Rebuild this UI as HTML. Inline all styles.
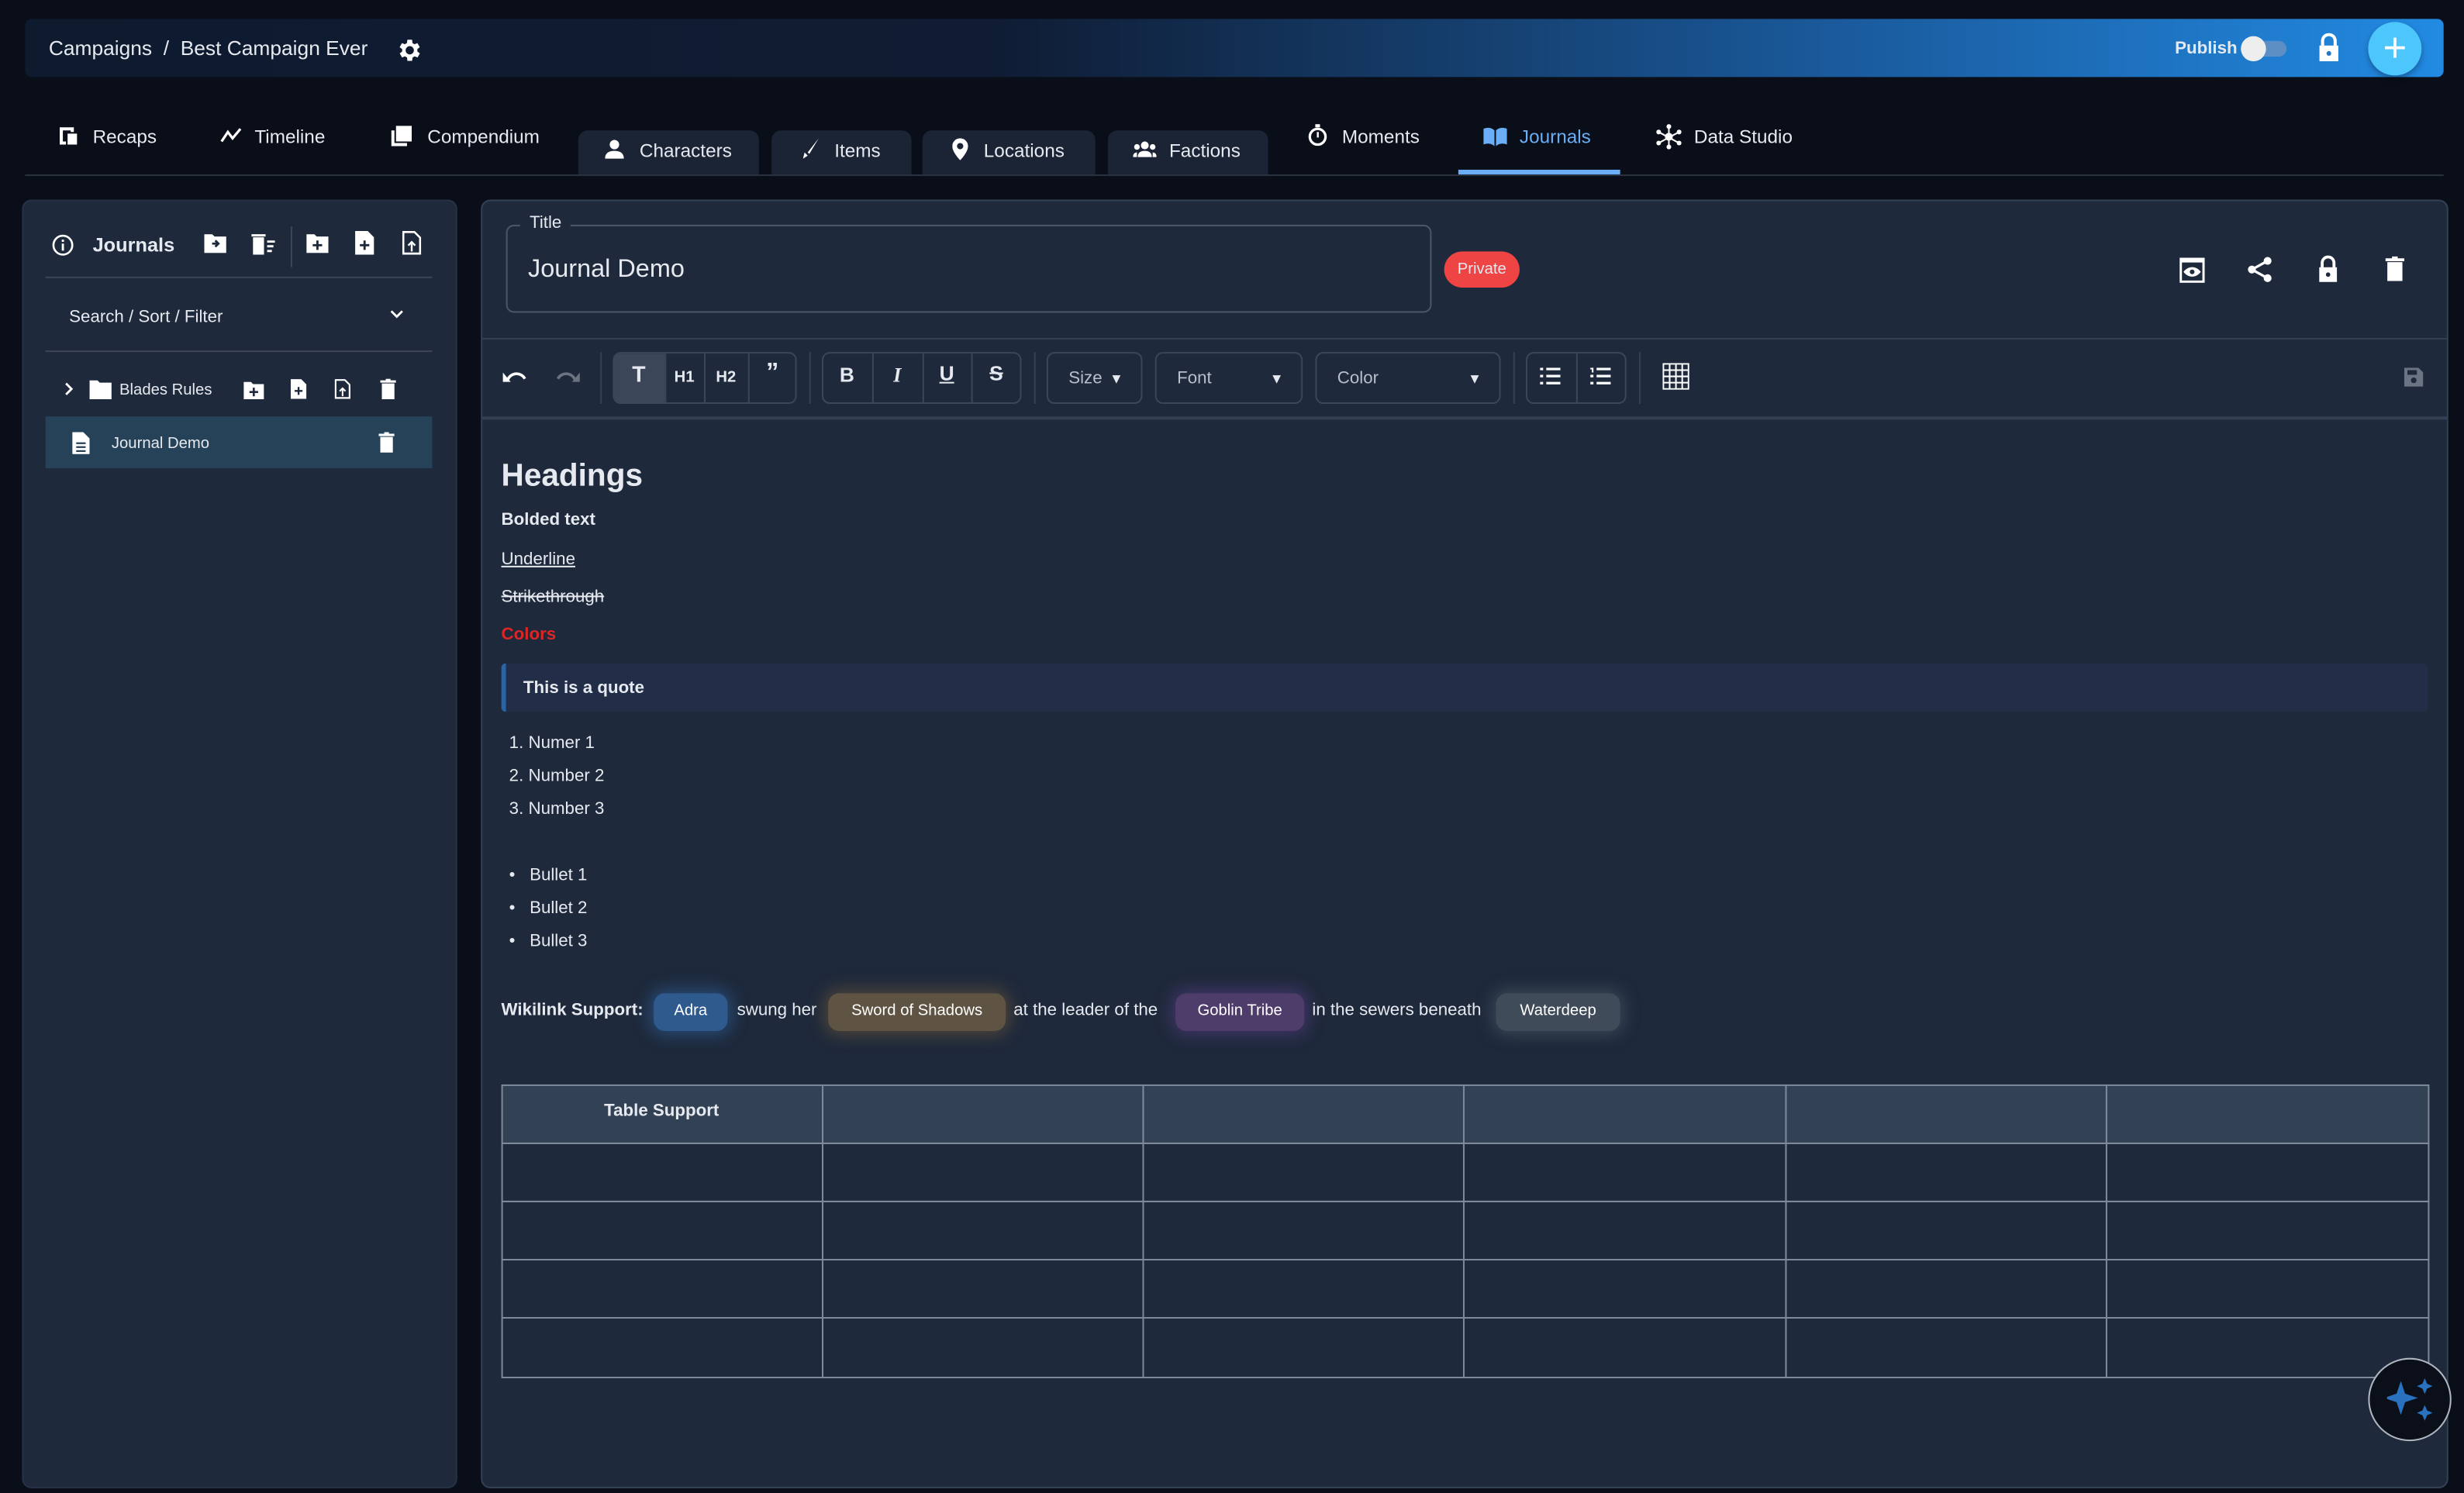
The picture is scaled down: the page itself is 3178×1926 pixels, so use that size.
<!DOCTYPE html>
<html><head><meta charset="utf-8"><style>
*{box-sizing:border-box;margin:0;padding:0}
html,body{width:3178px;height:1926px;overflow:hidden;background:#0a0e18}
#s{position:absolute;left:0;top:0;width:1568px;height:950px;transform:scale(2.0268,2.0274);transform-origin:0 0;font-family:"Liberation Sans",sans-serif;color:#e6e9ef;background:#0a0e18}
.a{position:absolute}
.t{position:absolute;white-space:nowrap;font-size:12px;line-height:14px}
svg{position:absolute;fill:#fff}
.tab{position:absolute;top:83px;height:28px;background:#1b2435;border-radius:6px 6px 0 0}
.grp{position:absolute;top:224px;height:33px;border:1px solid #3b4658;border-radius:5px}
.vs{position:absolute;top:0;bottom:0;width:1px;background:#3b4658}
.chip{position:absolute;top:632px;height:24px;border-radius:7px;font-size:10px;line-height:24px;text-align:center;color:#fff}
</style></head><body><div id="s">
<!-- header -->
<div class="a" style="left:16px;top:12px;width:1539px;height:37px;border-radius:4px;background:linear-gradient(90deg,#0e1a2e 0%,#0f1c33 40%,#1a5a9c 75%,#228ae2 100%)"></div>
<div class="t" style="left:31px;top:24px;font-size:13px">Campaigns &nbsp;/ &nbsp;Best Campaign Ever</div>
<svg style="left:251px;top:23px" width="18" height="18" viewBox="0 0 24 24"><path d="M19.4 13a7.5 7.5 0 000-2l2.1-1.6-2-3.5-2.5 1a7 7 0 00-1.7-1L15 3h-4l-.4 2.9a7 7 0 00-1.7 1l-2.5-1-2 3.5L6.6 11a7.5 7.5 0 000 2l-2.1 1.6 2 3.5 2.5-1a7 7 0 001.7 1L11 21h4l.4-2.9a7 7 0 001.7-1l2.5 1 2-3.5zM13 15.5a3.5 3.5 0 110-7 3.5 3.5 0 010 7z"/></svg>
<div class="t" style="left:1384px;top:24px;font-size:11px;font-weight:bold">Publish</div>
<div class="a" style="left:1430px;top:26px;width:25px;height:10px;border-radius:5px;background:#5d8fc4"></div>
<div class="a" style="left:1426px;top:23px;width:16px;height:16px;border-radius:8px;background:#eee"></div>
<svg style="left:1474px;top:21px" width="16" height="18" viewBox="0 0 16 18"><path d="M3 8V5a5 5 0 0110 0v3h-2V5a3 3 0 00-6 0v3zM2 8h12v10H2z"/><circle cx="8" cy="13" r="1.5" fill="#2379c8"/></svg>
<div class="a" style="left:1507px;top:14px;width:34px;height:34px;border-radius:17px;background:#4cc6fb;box-shadow:0 2px 4px rgba(0,0,0,.3)"></div>
<div class="t" style="left:1507px;top:16px;width:34px;text-align:center;font-size:26px;line-height:28px;color:#fff">+</div>
<!-- nav -->
<div class="tab" style="left:368px;width:115px"></div>
<div class="tab" style="left:491px;width:89px"></div>
<div class="tab" style="left:587px;width:110px"></div>
<div class="tab" style="left:705px;width:102px"></div>
<div class="a" style="left:16px;top:111px;width:1539px;height:1px;background:#2a3140"></div>
<div class="a" style="left:928px;top:108px;width:103px;height:3px;background:#6aaef5"></div>
<svg style="left:37px;top:80px" width="13" height="13" viewBox="0 0 13 13"><path d="M1 1h9v3H8V3H3v7h2v2H1zM6 5h6v7H6z"/></svg>
<div class="t" style="left:59px;top:80px;font-size:12px">Recaps</div>
<svg style="left:140px;top:81px" width="14" height="10" viewBox="0 0 14 10"><path d="M1 9l4-6 3 4 5-6" stroke="#fff" stroke-width="1.6" fill="none"/></svg>
<div class="t" style="left:162px;top:80px">Timeline</div>
<svg style="left:249px;top:80px" width="13" height="13" viewBox="0 0 13 13"><path d="M3 0h10v10H3zM0 3h2v8h8v2H0z"/></svg>
<div class="t" style="left:272px;top:80px">Compendium</div>
<svg style="left:385px;top:89px" width="12" height="12" viewBox="0 0 12 12"><circle cx="6" cy="3" r="3"/><path d="M0 12c0-4 3-5 6-5s6 1 6 5z"/></svg>
<div class="t" style="left:407px;top:89px">Characters</div>
<svg style="left:510px;top:88px" width="12" height="13" viewBox="0 0 12 13"><path d="M11 0L4 9l1 1zM2 9l2 2-3 2z"/></svg>
<div class="t" style="left:531px;top:89px">Items</div>
<svg style="left:606px;top:88px" width="10" height="14" viewBox="0 0 10 14"><path d="M5 0a5 5 0 015 5c0 4-5 9-5 9S0 9 0 5a5 5 0 015-5z"/><circle cx="5" cy="5" r="2" fill="#1b2435"/></svg>
<div class="t" style="left:626px;top:89px">Locations</div>
<svg style="left:721px;top:90px" width="15" height="10" viewBox="0 0 15 10"><circle cx="7.5" cy="2.5" r="2.5"/><circle cx="2.5" cy="3.5" r="1.8"/><circle cx="12.5" cy="3.5" r="1.8"/><path d="M3 10c0-3 2-4 4.5-4S12 7 12 10zM0 10c0-2 1-3 2.5-3v3zM15 10c0-2-1-3-2.5-3v3z"/></svg>
<div class="t" style="left:744px;top:89px">Factions</div>
<svg style="left:832px;top:79px" width="13" height="14" viewBox="0 0 13 14"><circle cx="6.5" cy="8" r="5" stroke="#fff" stroke-width="1.6" fill="none"/><path d="M5 0h3v2H5zM6 5h1.2v3.5H6z"/></svg>
<div class="t" style="left:854px;top:80px">Moments</div>
<svg style="left:944px;top:81px" width="15" height="12" viewBox="0 0 15 12"><path d="M0 1c2-1 5-1 7 1v10C5 10 2 10 0 11zM15 1c-2-1-5-1-7 1v10c2-2 5-2 7-1z" fill="#6aaef5"/></svg>
<div class="t" style="left:967px;top:80px;color:#6aaef5">Journals</div>
<svg style="left:1054px;top:79px" width="16" height="16" viewBox="0 0 16 16"><circle cx="8" cy="8" r="2.5"/><circle cx="8" cy="1.5" r="1.5"/><circle cx="8" cy="14.5" r="1.5"/><circle cx="1.5" cy="5" r="1.5"/><circle cx="14.5" cy="5" r="1.5"/><circle cx="1.5" cy="12" r="1.5"/><circle cx="14.5" cy="12" r="1.5"/><path d="M8 1v14M1.5 5L14.5 12M14.5 5L1.5 12" stroke="#fff" stroke-width="1"/></svg>
<div class="t" style="left:1078px;top:80px">Data Studio</div>
<!-- left panel -->
<div class="a" style="left:14px;top:127px;width:277px;height:820px;background:#1e293b;border-radius:6px;border:1px solid #263246"></div>
<svg style="left:33px;top:149px" width="14" height="14" viewBox="0 0 14 14"><circle cx="7" cy="7" r="6" stroke="#fff" stroke-width="1.3" fill="none"/><path d="M6.3 6h1.4v4.5H6.3zM6.3 3.5h1.4v1.4H6.3z"/></svg>
<div class="t" style="left:59px;top:149px;font-size:12.5px;font-weight:bold">Journals</div>
<svg style="left:130px;top:149px" width="14" height="12" viewBox="0 0 14 12"><path d="M0 0h5l1.5 1.5H14V12H0z"/><path d="M5 6h4M7 4l2 2-2 2" stroke="#1e293b" stroke-width="1.4" fill="none"/></svg>
<svg style="left:160px;top:148px" width="15" height="14" viewBox="0 0 15 14"><path d="M0 1h9v1.5H0zM1 3h7v11H1zM10 5h5v1.4h-5zM10 8h4v1.4h-4zM10 11h3v1.4h-3z"/></svg>
<div class="a" style="left:185px;top:144px;width:1px;height:26px;background:#3b4658"></div>
<svg style="left:195px;top:149px" width="14" height="12" viewBox="0 0 14 12"><path d="M0 0h5l1.5 1.5H14V12H0z"/><path d="M7 4v6M4 7h6" stroke="#1e293b" stroke-width="1.4"/></svg>
<svg style="left:226px;top:147px" width="12" height="15" viewBox="0 0 12 15"><path d="M0 0h8l4 4v11H0z"/><path d="M6 6v6M3 9h6" stroke="#1e293b" stroke-width="1.4"/></svg>
<svg style="left:256px;top:147px" width="12" height="15" viewBox="0 0 12 15"><path d="M0 0h8l4 4v11H0z"/><path d="M1.3 1.3h6.2l3.2 3.2v9.2H1.3z" fill="#1e293b"/><path d="M6 13V7M3.8 9.2L6 7l2.2 2.2" stroke="#fff" stroke-width="1.2" fill="none"/></svg>
<div class="a" style="left:29px;top:176px;width:246px;height:1px;background:#3b4658"></div>
<div class="t" style="left:44px;top:195px;font-size:11px">Search / Sort / Filter</div>
<svg style="left:248px;top:197px" width="9" height="6" viewBox="0 0 9 6"><path d="M1 1l3.5 3.5L8 1" stroke="#fff" stroke-width="1.4" fill="none"/></svg>
<div class="a" style="left:29px;top:223px;width:246px;height:1px;background:#3b4658"></div>
<svg style="left:41px;top:243px" width="6" height="9" viewBox="0 0 6 9"><path d="M1 1l3.5 3.5L1 8" stroke="#fff" stroke-width="1.4" fill="none"/></svg>
<svg style="left:57px;top:242px" width="14" height="12" viewBox="0 0 14 12"><path d="M0 0h5l1.5 1.5H14V12H0z"/></svg>
<div class="t" style="left:76px;top:242px;font-size:10px">Blades Rules</div>
<svg style="left:155px;top:243px" width="13" height="11" viewBox="0 0 14 12"><path d="M0 0h5l1.5 1.5H14V12H0z"/><path d="M7 4v6M4 7h6" stroke="#1e293b" stroke-width="1.4"/></svg>
<svg style="left:185px;top:241px" width="10" height="13" viewBox="0 0 12 15"><path d="M0 0h8l4 4v11H0z"/><path d="M6 6v6M3 9h6" stroke="#1e293b" stroke-width="1.4"/></svg>
<svg style="left:213px;top:241px" width="10" height="13" viewBox="0 0 12 15"><path d="M0 0h8l4 4v11H0z"/><path d="M1.3 1.3h6.2l3.2 3.2v9.2H1.3z" fill="#1e293b"/><path d="M6 13V7M3.8 9.2L6 7l2.2 2.2" stroke="#fff" stroke-width="1.2" fill="none"/></svg>
<svg style="left:242px;top:241px" width="10" height="13" viewBox="0 0 10 13"><path d="M0 1h3.5V0h3v1H10v1.5H0zM1 3h8v10H1z"/></svg>
<div class="a" style="left:29px;top:265px;width:246px;height:33px;background:#264259"></div>
<svg style="left:46px;top:275px" width="11" height="14" viewBox="0 0 11 14"><path d="M0 0h7l4 4v10H0z"/><path d="M2.5 7h6M2.5 9.5h6M2.5 12h6" stroke="#264259" stroke-width="1.1"/></svg>
<div class="t" style="left:71px;top:276px;font-size:10px">Journal Demo</div>
<svg style="left:241px;top:275px" width="10" height="13" viewBox="0 0 10 13"><path d="M0 1h3.5V0h3v1H10v1.5H0zM1 3h8v10H1z"/></svg>
<!-- right panel -->
<div class="a" style="left:306px;top:127px;width:1252px;height:820px;background:#1e293b;border-radius:6px;border:1px solid #334155"></div>
<div class="a" style="left:322px;top:143px;width:589px;height:56px;border:1px solid #4a5568;border-radius:5px"></div>
<div class="a" style="left:331px;top:138px;width:32px;height:8px;background:#1e293b"></div>
<div class="t" style="left:337px;top:135px;font-size:11px">Title</div>
<div class="t" style="left:336px;top:163px;font-size:16px;line-height:18px">Journal Demo</div>
<div class="a" style="left:919px;top:160px;width:48px;height:23px;border-radius:12px;background:#ef4444"></div>
<div class="t" style="left:919px;top:165px;width:48px;text-align:center;font-size:10px">Private</div>
<svg style="left:1387px;top:164px" width="16" height="16" viewBox="0 0 16 16"><path d="M0 0h16v16H0z"/><path d="M1.5 3h13v11.5h-13z" fill="#1e293b"/><path d="M2.5 9c3-4 8-4 11 0-3 4-8 4-11 0z"/><circle cx="8" cy="9" r="1.5" fill="#1e293b"/></svg>
<svg style="left:1430px;top:163px" width="16" height="17" viewBox="0 0 16 17"><circle cx="13" cy="3" r="2.5"/><circle cx="3" cy="8.5" r="2.5"/><circle cx="13" cy="14" r="2.5"/><path d="M13 3L3 8.5 13 14" stroke="#fff" stroke-width="1.6" fill="none"/></svg>
<svg style="left:1474px;top:162px" width="15" height="18" viewBox="0 0 16 18"><path d="M3 8V5a5 5 0 0110 0v3h-2V5a3 3 0 00-6 0v3zM2 8h12v10H2z"/><circle cx="8" cy="13" r="1.5" fill="#1e293b"/></svg>
<svg style="left:1518px;top:163px" width="12" height="16" viewBox="0 0 10 13"><path d="M0 1h3.5V0h3v1H10v1.5H0zM1 3h8v10H1z"/></svg>
<div class="a" style="left:307px;top:215px;width:1250px;height:1px;background:#334155"></div>
<div class="a" style="left:307px;top:265px;width:1250px;height:2px;background:#334155"></div>
<!-- toolbar -->
<svg style="left:320px;top:234px" width="15" height="11" viewBox="0 0 15 11"><path d="M3 8a6 6 0 0111-1" stroke="#fff" stroke-width="1.8" fill="none"/><path d="M0 3v6h5z"/></svg>
<svg style="left:354px;top:234px" width="15" height="11" viewBox="0 0 15 11"><path d="M12 8A6 6 0 001 7" stroke="#6b7280" stroke-width="1.8" fill="none"/><path d="M15 3v6h-5z" fill="#6b7280"/></svg>
<div class="a" style="left:382px;top:224px;width:1px;height:33px;background:#334155"></div>
<div class="grp" style="left:390px;width:117px"><div class="a" style="left:0;top:0;width:32px;height:31px;background:#3b4658;border-radius:4px 0 0 4px"></div><div class="vs" style="left:32px"></div><div class="vs" style="left:57px"></div><div class="vs" style="left:85px"></div></div>
<div class="t" style="left:390px;top:231px;width:33px;text-align:center;font-size:14px;font-weight:bold">T</div>
<div class="t" style="left:423px;top:234px;width:25px;text-align:center;font-size:10px;font-weight:bold">H1</div>
<div class="t" style="left:448px;top:234px;width:28px;text-align:center;font-size:10px;font-weight:bold">H2</div>
<div class="t" style="left:476px;top:231px;width:31px;text-align:center;font-size:16px;font-weight:bold">&#8221;</div>
<div class="a" style="left:515px;top:224px;width:1px;height:33px;background:#334155"></div>
<div class="grp" style="left:523px;width:127px"><div class="vs" style="left:31px"></div><div class="vs" style="left:63px"></div><div class="vs" style="left:94px"></div></div>
<div class="t" style="left:523px;top:232px;width:32px;text-align:center;font-size:13px;font-weight:bold">B</div>
<div class="t" style="left:555px;top:232px;width:32px;text-align:center;font-size:13px;font-weight:bold;font-style:italic;font-family:'Liberation Serif',serif">I</div>
<div class="t" style="left:587px;top:231px;width:31px;text-align:center;font-size:13px;font-weight:bold;text-decoration:underline">U</div>
<div class="t" style="left:618px;top:231px;width:32px;text-align:center;font-size:13px;font-weight:bold;text-decoration:line-through">S</div>
<div class="a" style="left:658px;top:224px;width:1px;height:33px;background:#334155"></div>
<div class="grp" style="left:666px;width:61px"></div>
<div class="t" style="left:680px;top:234px;font-size:11px;color:#b8bfca">Size</div>
<div class="t" style="left:706px;top:234px;font-size:9px">▼</div>
<div class="grp" style="left:735px;width:94px"></div>
<div class="t" style="left:749px;top:234px;font-size:11px;color:#b8bfca">Font</div>
<div class="t" style="left:808px;top:234px;font-size:9px">▼</div>
<div class="grp" style="left:837px;width:118px"></div>
<div class="t" style="left:851px;top:234px;font-size:11px;color:#b8bfca">Color</div>
<div class="t" style="left:934px;top:234px;font-size:9px">▼</div>
<div class="a" style="left:963px;top:224px;width:1px;height:33px;background:#334155"></div>
<div class="grp" style="left:971px;width:64px"><div class="vs" style="left:31px"></div></div>
<svg style="left:980px;top:234px" width="13" height="11" viewBox="0 0 13 11"><path d="M0 0h2v1.6H0zM0 4.5h2v1.6H0zM0 9h2v1.6H0zM4 0h9v1.6H4zM4 4.5h9v1.6H4zM4 9h9v1.6H4z"/></svg>
<svg style="left:1012px;top:234px" width="13" height="11" viewBox="0 0 13 11"><path d="M0 0h2v3H1V1H0zM0 4.5h2v1.6H0zM0 9h2v1.6H0zM4 0h9v1.6H4zM4 4.5h9v1.6H4zM4 9h9v1.6H4z"/></svg>
<div class="a" style="left:1043px;top:224px;width:1px;height:33px;background:#334155"></div>
<svg style="left:1058px;top:231px" width="17" height="17" viewBox="0 0 17 17"><path d="M0.5 0.5h16v16h-16zM4.5 0v17M8.5 0v17M12.5 0v17M0 4.5h17M0 8.5h17M0 12.5h17" stroke="#fff" stroke-width="1" fill="none"/></svg>
<svg style="left:1530px;top:234px" width="12" height="12" viewBox="0 0 12 12"><path d="M0 0h9l3 3v9H0z" fill="#6b7483"/><path d="M2 1.5h6v3H2z" fill="#1e293b"/><circle cx="6" cy="8" r="1.8" fill="#1e293b"/></svg>
<!-- content -->
<div class="t" style="left:319px;top:292px;font-size:20px;line-height:22px;font-weight:bold">Headings</div>
<div class="t" style="left:319px;top:324px;font-size:11px;font-weight:bold">Bolded text</div>
<div class="t" style="left:319px;top:349px;font-size:11px;text-decoration:underline">Underline</div>
<div class="t" style="left:319px;top:373px;font-size:11px;text-decoration:line-through">Strikethrough</div>
<div class="t" style="left:319px;top:397px;font-size:11px;font-weight:bold;color:#dc2626">Colors</div>
<div class="a" style="left:319px;top:422px;width:1226px;height:31px;background:#222d47;border-left:3px solid #2a64a8;border-radius:3px"></div>
<div class="t" style="left:333px;top:431px;font-size:11px;font-weight:bold">This is a quote</div>
<div class="t" style="left:324px;top:466px;font-size:11px">1. Numer 1</div>
<div class="t" style="left:324px;top:487px;font-size:11px">2. Number 2</div>
<div class="t" style="left:324px;top:508px;font-size:11px">3. Number 3</div>
<div class="t" style="left:324px;top:550px;font-size:11px">•&nbsp;&nbsp; Bullet 1</div>
<div class="t" style="left:324px;top:571px;font-size:11px">•&nbsp;&nbsp; Bullet 2</div>
<div class="t" style="left:324px;top:592px;font-size:11px">•&nbsp;&nbsp; Bullet 3</div>
<div class="t" style="left:319px;top:636px;font-size:11px;font-weight:bold">Wikilink Support:</div>
<div class="chip" style="left:416px;width:47px;background:#2e5a8e;box-shadow:0 0 10px 3px rgba(50,110,180,.45)">Adra</div>
<div class="t" style="left:469px;top:636px;font-size:11px">swung her</div>
<div class="chip" style="left:527px;width:113px;background:#5f5443;box-shadow:0 0 10px 3px rgba(130,100,60,.45)">Sword of Shadows</div>
<div class="t" style="left:645px;top:636px;font-size:11px">at the leader of the</div>
<div class="chip" style="left:748px;width:82px;background:#4e3d6b;box-shadow:0 0 10px 3px rgba(110,70,160,.4)">Goblin Tribe</div>
<div class="t" style="left:835px;top:636px;font-size:11px">in the sewers beneath</div>
<div class="chip" style="left:952px;width:79px;background:#3f4b58;box-shadow:0 0 10px 3px rgba(90,110,120,.4)">Waterdeep</div>
<!-- table -->
<div class="a" style="left:319px;top:690px;width:1226px;height:37px;background:#334155"></div>
<svg style="left:319px;top:690px;fill:none" width="1227" height="187" viewBox="0 0 1227 187"><g stroke="#7e8a9c" stroke-width="1"><rect x="0.5" y="0.5" width="1226" height="186"/><path d="M0 37.5h1227M0 74.5h1227M0 111.5h1227M0 148.5h1227M204.5 0v187M408.5 0v187M612.5 0v187M817.5 0v187M1021.5 0v187"/></g></svg>
<div class="t" style="left:319px;top:700px;width:204px;text-align:center;font-size:11px;font-weight:bold">Table Support</div>
<!-- floating -->
<div class="a" style="left:1507px;top:864px;width:53px;height:53px;border-radius:27px;background:#0b0f19;border:1px solid #b0b6c0"></div>
<svg style="left:1519px;top:876px" width="30" height="30" viewBox="0 0 30 30"><path d="M12 3l3 9 9 3-9 3-3 9-3-9-9-3 9-3z" fill="#2872c0" transform="translate(-2 0) scale(.9)"/><path d="M24 1l1.5 3.5L29 6l-3.5 1.5L24 11l-1.5-3.5L19 6l3.5-1.5z" fill="#2872c0"/><path d="M24 18l1.5 3.5L29 23l-3.5 1.5L24 28l-1.5-3.5L19 23l3.5-1.5z" fill="#2872c0"/></svg>
</div></body></html>
